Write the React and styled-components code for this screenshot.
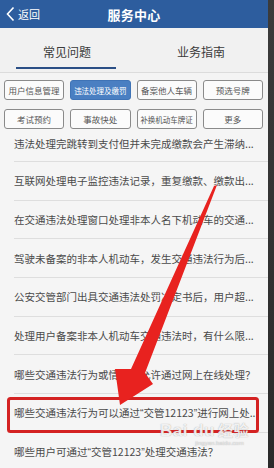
import React from "react";
import styled, { createGlobalStyle } from "styled-components";

const Global = createGlobalStyle`
  html, body { margin: 0; padding: 0; }
  body {
    width: 274px; height: 468px; overflow: hidden;
    background: #2f2f2f;
    font-family: "Noto Sans CJK SC", "Noto Sans", sans-serif;
  }
`;

const Frame = styled.div`
  display: flex;
  width: 274px;
  height: 468px;
  position: relative;
  overflow: hidden;
`;

const Screen = styled.div`
  width: 268px;
  height: 468px;
  display: flex;
  flex-direction: column;
  background: #f5f5f5;
  overflow: hidden;
`;

const Edge = styled.div`
  flex: 1;
  background: linear-gradient(#3b3b3b, #2a2a2a);
`;

const Header = styled.div`
  height: 28px;
  flex: none;
  background: #2d5d9e;
  display: grid;
  grid-template-columns: 60px 1fr 60px;
  align-items: center;
  color: #fff;
`;

const Back = styled.div`
  display: flex;
  align-items: center;
  gap: 3px;
  padding-left: 6px;
  font-size: 11px;
`;

const Title = styled.div`
  text-align: center;
  font-size: 13px;
  font-weight: 700;
  letter-spacing: 0.3px;
`;

const Tabs = styled.div`
  height: 44px;
  flex: none;
  display: grid;
  grid-template-columns: 1fr 1fr;
  background: #f1f1f1;
  border-bottom: 1px solid #dcdcdc;
`;

const Tab = styled.div`
  position: relative;
  display: flex;
  align-items: center;
  justify-content: center;
  font-size: 12px;
  color: #3a3a3a;
  padding-top: 2px;
  &::after {
    content: "";
    display: ${(p) => (p.$active ? "block" : "none")};
    position: absolute;
    left: 16px;
    right: 18px;
    bottom: 3px;
    height: 2px;
    background: #2b4f86;
  }
`;

const Panel = styled.div`
  flex: none;
  display: grid;
  grid-template-columns: repeat(4, 1fr);
  column-gap: 6px;
  row-gap: 9px;
  padding: 7px 5px 0 4px;
  background: #f4f4f4;
`;

const Chip = styled.div`
  height: 20px;
  box-sizing: border-box;
  border: 1px solid ${(p) => (p.$active ? "#3f73b6" : "#8a8a8a")};
  border-radius: 3px;
  background: ${(p) => (p.$active ? "#4a7fc2" : "#fbfbfb")};
  color: ${(p) => (p.$active ? "#fff" : "#555")};
  font-size: ${(p) => (p.$small ? "7.5px" : "8.5px")};
  display: flex;
  align-items: center;
  justify-content: center;
  white-space: nowrap;
  overflow: hidden;
`;

const List = styled.div`
  display: flex;
  flex-direction: column;
  background: #f5f5f5;
`;

const Item = styled.div`
  height: ${(p) => (p.$first ? "33px" : "38.7px")};
  flex: none;
  box-sizing: border-box;
  margin-left: 14px;
  border-bottom: 1px solid ${(p) => (p.$last ? "transparent" : "#dedede")};
  display: flex;
  align-items: center;
  padding-bottom: ${(p) => (p.$first ? "3px" : "0")};
  font-size: 10.5px;
  color: #4a4a4a;
  white-space: nowrap;
  overflow: hidden;
`;

const Quote = styled.span`
  font-family: "Liberation Sans", sans-serif;
`;

const Overlay = styled.svg`
  position: absolute;
  left: 0;
  top: 0;
  width: 274px;
  height: 468px;
  pointer-events: none;
`;

const Watermark = styled.div`
  position: absolute;
  left: 160px;
  top: 421px;
  display: flex;
  flex-direction: column;
  align-items: center;
  color: rgba(255, 255, 255, 0.85);
  text-shadow: 0 0 1px rgba(120, 120, 120, 0.7);
  pointer-events: none;
`;

const WmMain = styled.div`
  font-family: "Liberation Sans", sans-serif;
  font-size: 17px;
  font-weight: 700;
  letter-spacing: 0.5px;
  line-height: 18px;
  span { font-family: "Noto Sans CJK SC", sans-serif; font-size: 15px; margin-left: 3px; }
`;

const WmSub = styled.div`
  font-family: "Liberation Sans", sans-serif;
  font-size: 6px;
  line-height: 7px;
  color: rgba(255, 255, 255, 0.6);
  margin-left: 30px;
`;

const chips = [
  { t: "用户信息管理" },
  { t: "违法处理及缴罚", active: true, small: true },
  { t: "备案他人车辆" },
  { t: "预选号牌" },
  { t: "考试预约" },
  { t: "事故快处" },
  { t: "补换机动车牌证", small: true },
  { t: "更多" },
];

const items = [
  ["违法处理完跳转到支付但并未完成缴款会产生滞纳..."],
  ["互联网处理电子监控违法记录，重复缴款、缴款出..."],
  ["在交通违法处理窗口处理非本人名下机动车的交通..."],
  ["驾驶未备案的非本人机动车，发生交通违法行为后..."],
  ["公安交管部门出具交通违法处罚决定书后，用户超..."],
  ["处理用户备案非本人机动车交通违法时，有什么限..."],
  ["哪些交通违法行为或情形不允许通过网上在线处理？"],
  ["哪些交通违法行为可以通过", "交管12123", "进行网上处..."],
  ["哪些用户可通过", "交管12123", "处理交通违法？"],
];

export default function App() {
  return (
    <>
      <Global />
      <Frame>
        <Screen>
          <Header>
            <Back>
              <svg width="9" height="16" viewBox="0 0 9 16">
                <polyline points="7.5,1.5 1.5,8 7.5,14.5" fill="none" stroke="#fff" strokeWidth="1.6" />
              </svg>
              返回
            </Back>
            <Title>服务中心</Title>
            <div />
          </Header>
          <Tabs>
            <Tab $active>常见问题</Tab>
            <Tab>业务指南</Tab>
          </Tabs>
          <Panel>
            {chips.map((c) => (
              <Chip key={c.t} $active={c.active} $small={c.small}>{c.t}</Chip>
            ))}
          </Panel>
          <List>
            {items.map((parts, i) => (
              <Item key={i} $first={i === 0} $last={i === items.length - 1}>
                {parts.length === 1 ? (
                  parts[0]
                ) : (
                  <>
                    {parts[0]}
                    <Quote>“</Quote>
                    {parts[1]}
                    <Quote>”</Quote>
                    {parts[2]}
                  </>
                )}
              </Item>
            ))}
          </List>
        </Screen>
        <Edge />
        <Overlay viewBox="0 0 274 468">
          <rect x="8.5" y="398.5" width="249" height="33" rx="2" fill="none" stroke="#d42222" strokeWidth="3" />
          <polygon
            points="217,185 145,373 153,384 120,405 115,369 131,369 214,186"
            fill="#e8221f"
          />
        </Overlay>
        <Watermark>
          <WmMain>Bai du<span>经验</span></WmMain>
          <WmSub>jingyan.baidu.com</WmSub>
        </Watermark>
      </Frame>
    </>
  );
}
